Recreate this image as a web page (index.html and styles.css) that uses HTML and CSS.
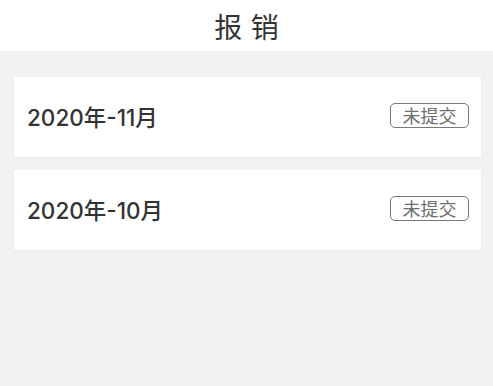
FILE: index.html
```html
<!DOCTYPE html>
<html lang="zh">
<head>
<meta charset="utf-8">
<title>报销</title>
<link rel="stylesheet" href="styles.css">
</head>
<body>
<header class="topbar"><h1 class="title">报&nbsp;销</h1></header>
<main class="list">
  <div class="card">
    <span class="month">2020年-11月</span>
    <span class="badge">未提交</span>
  </div>
  <div class="card">
    <span class="month">2020年-10月</span>
    <span class="badge">未提交</span>
  </div>
</main>
</body>
</html>
```
FILE: styles.css
```css
html, body {
  margin: 0;
  padding: 0;
  height: 100%;
}
body {
  background: #f2f2f2;
  font-family: "Noto Sans CJK SC", "Noto Sans", sans-serif;
  color: #333;
}
.topbar {
  height: 51px;
  background: #fff;
  display: flex;
  align-items: center;
  justify-content: center;
}
.title {
  margin: 0;
  font-size: 28px;
  font-weight: 400;
  color: #333;
  line-height: 1;
  word-spacing: 2px;
}
.list {
  padding: 26px 12px 0 14px;
  display: flex;
  flex-direction: column;
  gap: 13px;
}
.card {
  height: 80px;
  background: #fff;
  box-shadow: 0 1px 3px rgba(0,0,0,0.04);
  display: flex;
  align-items: center;
  justify-content: space-between;
  padding: 0 12px 0 13px;
}
.month {
  font-family: Inter, "Noto Sans CJK SC", sans-serif;
  font-size: 22.5px;
  font-weight: 500;
  color: #333;
  margin-top: -2px;
}
.badge {
  box-sizing: border-box;
  width: 79px;
  height: 25px;
  border: 1px solid #777;
  border-radius: 5px;
  color: #6e6e6e;
  font-size: 18px;
  line-height: 23px;
  text-align: center;
  margin-top: -4px;
}
```
